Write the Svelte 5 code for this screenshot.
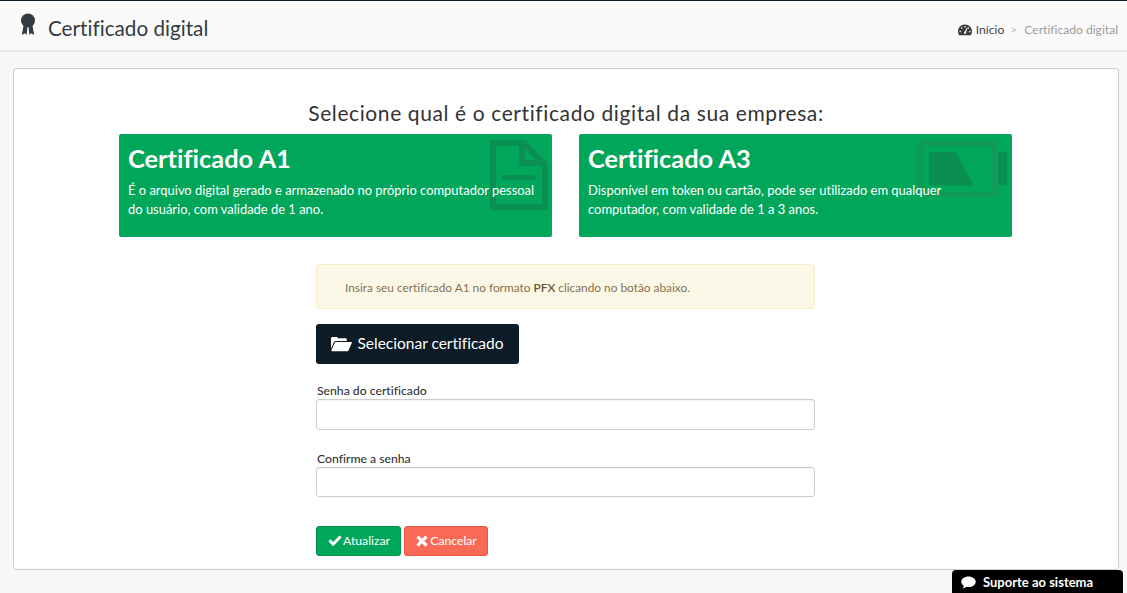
<script>
  let senha = $state("");
  let confirma = $state("");

  const tipos = [
    {
      id: "a1",
      titulo: "Certificado A1",
      texto: "É o arquivo digital gerado e armazenado no próprio computador pessoal do usuário, com validade de 1 ano."
    },
    {
      id: "a3",
      titulo: "Certificado A3",
      texto: "Disponível em token ou cartão, pode ser utilizado em qualquer computador, com validade de 1 a 3 anos."
    }
  ];
</script>

<header class="topbar">
  <h1 class="page-title">
    <svg class="ribbon" viewBox="0 0 16 23" width="16" height="23">
      <circle cx="8" cy="7.500" r="7" fill="#333b42" />
      <path d="M3.600 12.500 L1.800 22 L4.800 20.200 L6.600 22 L7.400 14.500 Z M12.400 12.500 L14.200 22 L11.200 20.200 L9.400 22 L8.600 14.500 Z" fill="#333b42" />
    </svg>
    Certificado digital
  </h1>
  <nav class="breadcrumb">
    <svg class="gauge" viewBox="0 0 14 12" width="14" height="12">
      <path fill="#3a3a3a" fill-rule="evenodd" d="M7 0.500C3.100 0.500 0 3.600 0 7.500c0 1.500.4 2.800 1.200 3.800h11.600C13.600 10.300 14 9 14 7.500 14 3.600 10.900.5 7 .5zM3.200 3.300h1.300v1.500H3.200zM6.300 1.900h1.400v1.500H6.300zM9.600 3.300h1.300v1.500H9.600zM1.500 6.700h1.400v1.500H1.500zM11.100 6.700h1.400v1.500h-1.400zM6.300 8.200 8.800 3.900l.7.300L8 8.600c.3.400.4.800.2 1.200H5.800c-.1-.6.1-1.200.5-1.600z" />
    </svg>
    <a href="#inicio">Início</a>
    <span class="sep">&gt;</span>
    <span class="current">Certificado digital</span>
  </nav>
</header>

<main class="card">
  <h2 class="lead">Selecione qual é o certificado digital da sua empresa:</h2>

  <div class="tipos">
    {#each tipos as t}
      <div class="tipo">
        {#if t.id === "a1"}
          <svg class="bg-icon file" viewBox="0 0 58 70" width="58" height="70">
            <path d="M3 3 H34 L55 25 V67 H3 Z" fill="none" stroke="#0a9054" stroke-width="6" stroke-linejoin="round" />
            <path d="M32 3 V23 H55" fill="none" stroke="#0a9054" stroke-width="6" stroke-linejoin="round" />
            <rect x="12" y="35" width="34" height="5" rx="1" fill="#0a9054" />
          </svg>
        {:else}
          <svg class="bg-icon battery" viewBox="0 0 90 56" width="90" height="56">
            <rect x="2.500" y="2.500" width="74" height="51" rx="2" fill="none" stroke="#0f9a5a" stroke-width="5" />
            <path d="M11.500 11.500 H37 L55 44 H11.500 Z" fill="#0a8f50" stroke="#0a8f50" stroke-linejoin="round" />
            <path d="M80 11 H89 V44 H80 Z" fill="#0a8f50" />
          </svg>
        {/if}
        <h3>{t.titulo}</h3>
        <p>{t.texto}</p>
      </div>
    {/each}
  </div>

  <form class="form">
    <div class="alert">Insira seu certificado A1 no formato <b>PFX</b> clicando no botão abaixo.</div>

    <button type="button" class="btn-file">
      <svg viewBox="0 0 22 16" width="21" height="16">
        <path fill="#fff" d="M0 13V2.200C0 1.300.7.600 1.600.6h4.200c.9 0 1.300.7 1.700 1.500h7.700c.8 0 1.400.6 1.400 1.400v1.300H5.200c-1 0-1.800.5-2.300 1.300zM4.300 6h17c.5 0 .8.500.5 1l-3.500 7.800c-.2.400-.6.700-1.100.7H1.100c-.6 0-.9-.5-.7-1z" />
      </svg>
      <span>Selecionar certificado</span>
    </button>

    <label class="field">
      <span>Senha do certificado</span>
      <input type="password" bind:value={senha} />
    </label>

    <label class="field second">
      <span>Confirme a senha</span>
      <input type="password" bind:value={confirma} />
    </label>

    <div class="actions">
      <button type="button" class="btn ok">
        <svg viewBox="0 0 14 12" width="14" height="12"><path fill="#fff" d="M0.500 6.500 2.500 4.300 5.200 7 11.600.5 13.600 2.600 5.200 11.300z" /></svg>
        Atualizar
      </button>
      <button type="button" class="btn cancel">
        <svg viewBox="0 0 12 12" width="12" height="12"><path fill="#fff" d="M2.600.4 6 3.700 9.400.4 11.700 2.700 8.300 6 11.700 9.400 9.400 11.700 6 8.300 2.600 11.700.3 9.400 3.700 6 .3 2.700z" /></svg>
        Cancelar
      </button>
    </div>
  </form>
</main>

<button class="suporte">
  <svg viewBox="0 0 16 14" width="15" height="13">
    <path fill="#fff" d="M8 .5c4.300 0 7.800 2.500 7.800 5.700S12.300 11.900 8 11.900c-.8 0-1.500-.1-2.200-.2-1 .9-2.500 1.700-4.300 1.800.8-.9 1.400-1.800 1.600-2.900C1.300 9.600.2 8 .2 6.200.2 3 3.700.5 8 .5z" />
  </svg>
  Suporte ao sistema
</button>

<style>
  :global(body) {
    background: #f7f7f7;
    font-family: "Lato", "Open Sans", sans-serif;
    font-variant-ligatures: none;
    color: #333;
    height: 593px;
    overflow: hidden;
  }

  .topbar {
    height: 50px;
    box-sizing: border-box;
    border-top: 1px solid #0d1b26;
    background: #fafafa;
    box-shadow: 0 1px 2px rgba(0, 0, 0, 0.12);
    display: flex;
    align-items: center;
    justify-content: space-between;
    padding: 0 9px 0 20px;
  }

  .page-title {
    margin: 5px 0 0;
    font-size: 20.700px;
    font-weight: 400;
    color: #333b42;
    display: flex;
    align-items: center;
    gap: 12px;
  }

  .ribbon {
    margin-top: -7px;
  }

  .breadcrumb {
    display: flex;
    align-items: center;
    margin-top: 8px;
    font-size: 12.100px;
    color: #9a9a9a;
  }

  .breadcrumb a {
    color: #444;
    text-decoration: none;
    margin-left: 4px;
  }

  .sep {
    margin: 0 7px 0 6px;
    color: #bbb;
  }

  .card {
    margin: 18px 8px 0 13px;
    height: 502px;
    box-sizing: border-box;
    background: #fff;
    border: 1px solid #ccc;
    border-radius: 3px;
    padding: 31px 105px 0;
  }

  .lead {
    margin: 0 0 8px;
    text-align: center;
    font-size: 21px;
    line-height: 26px;
    font-weight: 400;
    color: #333;
    letter-spacing: 0.6px;
  }

  .tipos {
    display: grid;
    grid-template-columns: 433px 433px;
    column-gap: 27px;
  }

  .tipo {
    position: relative;
    height: 103px;
    box-sizing: border-box;
    background: #00a65a;
    border-radius: 2px;
    color: #fff;
    padding: 8px 9px;
  }

  .tipo h3 {
    position: relative;
    margin: 0 0 7px;
    font-size: 25.400px;
    line-height: 32px;
    font-weight: 700;
  }

  .tipo p {
    position: relative;
    margin: 0;
    font-size: 12.950px;
    line-height: 19px;
    max-width: 412px;
  }

  .bg-icon {
    position: absolute;
    top: 6px;
  }

  .file {
    right: 4px;
  }

  .battery {
    top: 7px;
    right: 4px;
  }

  .form {
    width: 499px;
    margin: 27px 0 0 197px;
  }

  .alert {
    height: 45px;
    box-sizing: border-box;
    background: #fcf8e8;
    border: 1px solid #faebcc;
    border-radius: 3px;
    color: #85714f;
    font-size: 11.850px;
    line-height: 45px;
    padding-left: 28px;
  }

  .alert b {
    font-weight: 600;
    color: #6b5530;
  }

  .btn-file {
    margin-top: 15px;
    width: 203px;
    height: 40px;
    background: #0d1b26;
    color: #fff;
    border: none;
    border-radius: 3px;
    font: 400 15.500px "Lato", sans-serif;
    font-variant-ligatures: none;
    display: flex;
    align-items: center;
    justify-content: center;
    gap: 5px;
    padding: 0;
  }

  .btn-file span {
    margin-top: -3px;
  }

  .field {
    display: block;
    margin-top: 19px;
  }

  .field.second {
    margin-top: 21px;
  }

  .field span {
    display: block;
    font-size: 12.200px;
    line-height: 15px;
    font-weight: 500;
    color: #333;
    margin-left: 1px;
  }

  .field input {
    display: block;
    width: 100%;
    height: 31px;
    box-sizing: border-box;
    border: 1px solid #ccc;
    border-radius: 3px;
    background: #fff;
    box-shadow: inset 0 1px 1px rgba(0, 0, 0, 0.05);
    margin-top: 1px;
  }

  .second input {
    height: 30px;
  }

  .actions {
    display: flex;
    gap: 3px;
    margin-top: 29px;
  }

  .btn {
    height: 30px;
    box-sizing: border-box;
    border-radius: 3px;
    color: #fff;
    font: 400 12.200px "Lato", sans-serif;
    font-variant-ligatures: none;
    display: flex;
    align-items: center;
    justify-content: center;
    gap: 1px;
    padding: 0 0 1px 1px;
  }

  .ok {
    width: 85px;
    background: #00a65a;
    border: 1px solid #008d4c;
  }

  .cancel {
    width: 84px;
    background: #f96a56;
    border: 1px solid #e9563f;
    gap: 2px;
  }

  .suporte {
    position: fixed;
    right: 4px;
    bottom: 0;
    width: 171px;
    height: 23px;
    background: #000;
    color: #fff;
    border: none;
    border-radius: 4px 4px 0 0;
    font: 700 13px "Lato", sans-serif;
    font-variant-ligatures: none;
    display: flex;
    align-items: center;
    gap: 7px;
    padding: 1px 0 0 9px;
  }
</style>
